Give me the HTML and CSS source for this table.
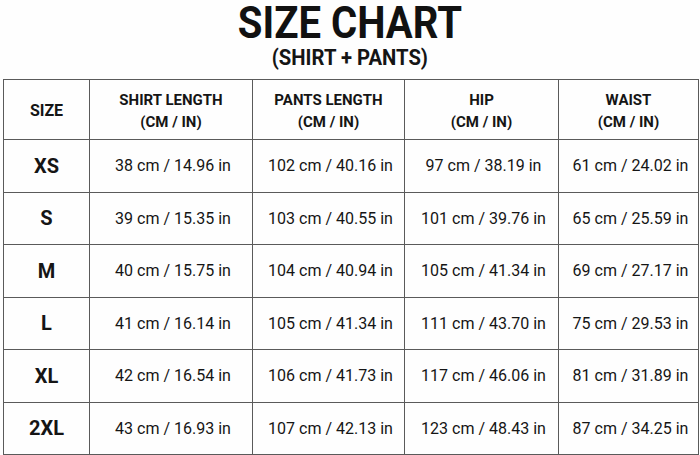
FILE: index.html
```html
<!DOCTYPE html>
<html lang="en">
<head>
<meta charset="utf-8">
<title>Size Chart</title>
<link rel="stylesheet" href="styles.css">
</head>
<body>
<div class="page">
  <header class="heading">
    <h1 class="title"><span>SIZE CHART</span></h1>
    <p class="subtitle"><span>(SHIRT + PANTS)</span></p>
  </header>
  <table class="chart">
    <colgroup>
      <col class="c-size">
      <col class="c-shirt">
      <col class="c-pants">
      <col class="c-hip">
      <col class="c-waist">
    </colgroup>
    <thead>
      <tr>
        <th class="h-size">SIZE</th>
        <th>SHIRT LENGTH<br>(CM / IN)</th>
        <th>PANTS LENGTH<br>(CM / IN)</th>
        <th>HIP<br>(CM / IN)</th>
        <th>WAIST<br>(CM / IN)</th>
      </tr>
    </thead>
    <tbody>
      <tr><th>XS</th><td>38 cm / 14.96 in</td><td>102 cm / 40.16 in</td><td>97 cm / 38.19 in</td><td>61 cm / 24.02 in</td></tr>
      <tr><th>S</th><td>39 cm / 15.35 in</td><td>103 cm / 40.55 in</td><td>101 cm / 39.76 in</td><td>65 cm / 25.59 in</td></tr>
      <tr><th>M</th><td>40 cm / 15.75 in</td><td>104 cm / 40.94 in</td><td>105 cm / 41.34 in</td><td>69 cm / 27.17 in</td></tr>
      <tr><th>L</th><td>41 cm / 16.14 in</td><td>105 cm / 41.34 in</td><td>111 cm / 43.70 in</td><td>75 cm / 29.53 in</td></tr>
      <tr><th>XL</th><td>42 cm / 16.54 in</td><td>106 cm / 41.73 in</td><td>117 cm / 46.06 in</td><td>81 cm / 31.89 in</td></tr>
      <tr><th>2XL</th><td>43 cm / 16.93 in</td><td>107 cm / 42.13 in</td><td>123 cm / 48.43 in</td><td>87 cm / 34.25 in</td></tr>
    </tbody>
  </table>
</div>
</body>
</html>
```

FILE: styles.css
```css
html, body {
  margin: 0;
  padding: 0;
  background: #fefefe;
}

body {
  font-family: Roboto, "Liberation Sans", Arial, sans-serif;
  color: #151515;
  width: 700px;
  height: 455px;
  overflow: hidden;
}

.page {
  padding: 0 2px 0 2px;
}

.heading {
  text-align: center;
  padding-bottom: 9px;
}

.title {
  margin: 0;
  font-size: 45px;
  line-height: 45px;
  font-weight: 700;
  color: #111;
}

.title span {
  display: inline-block;
  transform: scaleX(0.89);
}

.subtitle {
  margin: 0;
  font-size: 22px;
  line-height: 25px;
  font-weight: 700;
  color: #151515;
}

.subtitle span {
  display: inline-block;
  transform: scaleX(0.92);
}

.chart {
  width: 695px;
  border-collapse: collapse;
  table-layout: fixed;
  margin-left: 1px;
}

.c-size { width: 86px; }
.c-shirt { width: 163px; }
.c-pants { width: 152px; }
.c-hip { width: 154px; }
.c-waist { width: 140px; }

.chart th,
.chart td {
  border: 1px solid #5a5a5a;
  text-align: center;
  vertical-align: middle;
  padding: 0;
}

.chart thead tr {
  height: 60px;
}

.chart thead th {
  font-size: 15px;
  line-height: 22px;
  font-weight: 700;
  padding-top: 2px;
}

.chart thead th.h-size {
  font-size: 16px;
}

.chart tbody tr {
  height: 52.5px;
}

.chart tbody th {
  font-size: 20px;
  font-weight: 700;
}

.chart tbody td {
  font-size: 16px;
  font-weight: 400;
  padding-left: 4px;
}
```
